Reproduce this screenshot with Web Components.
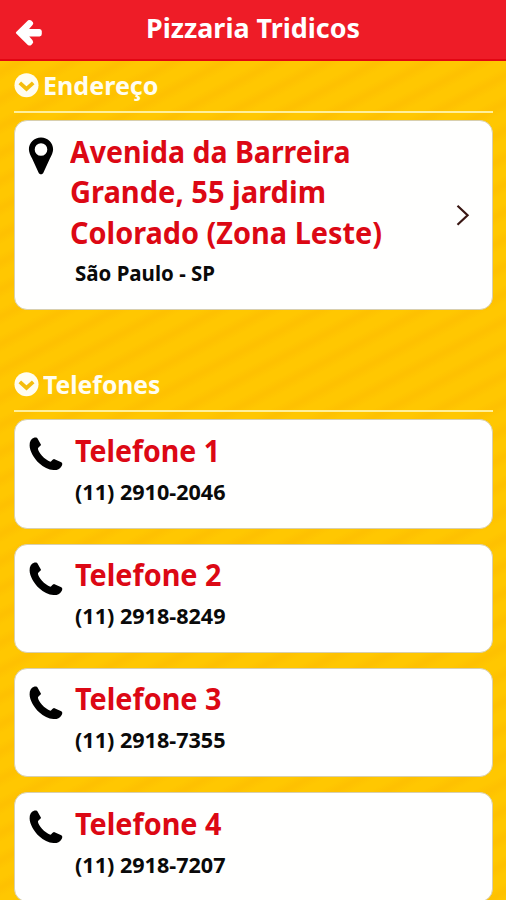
<!DOCTYPE html>
<html lang="pt-BR">
<head>
<meta charset="utf-8">
<title>Pizzaria Tridicos</title>
<style>
html,body{margin:0;height:900px;overflow:hidden}
body{font-family:"Noto Sans","Open Sans",sans-serif;font-weight:700}
</style>
</head>
<body>
<pizza-app></pizza-app>
<script>
// One line of text, condensed or widened to the advance width given in "w".
class FitLine extends HTMLElement{
  connectedCallback(){
    if(this.shadowRoot)return;
    const r=this.attachShadow({mode:'open'});
    r.innerHTML=`<style>:host{display:block;white-space:nowrap}span{display:inline-block;transform-origin:0 50%;vertical-align:top}</style><span><slot></slot></span>`;
    const s=r.querySelector('span');
    const w=parseFloat(this.getAttribute('w'));
    const n=s.getBoundingClientRect().width;
    if(w&&n){s.style.transform=`scaleX(${w/n})`;this.style.width=w+'px';}
  }
}
customElements.define('fit-line',FitLine);

class AppHeader extends HTMLElement{
  constructor(){
    super();
    this.attachShadow({mode:'open'}).innerHTML=`<style>
:host{display:grid;grid-template-columns:146px 1fr;box-sizing:border-box;height:61px;flex:none;background:#ee1c27;border-bottom:2px solid #e20612;color:#fff;font-size:27.5px;line-height:36px}
svg{margin:17px 0 0 14px}
.t{padding-top:10px}
</style>
<svg width="30" height="32" viewBox="14 17 30 32" fill="#fff" stroke="#fff" stroke-width="2" stroke-linejoin="round"><path d="M16.900 32.700 28.600 21.200Q29.800 20.500 31 21.600L32 22.600Q32.600 23.500 31.800 24.400L27 29.900H39.500Q40.800 30 40.800 31.200V34Q40.800 35.400 39.500 35.500H27L31.800 41Q32.600 42 31.800 42.900L30.800 44Q29.700 45 28.500 44.200Z"/></svg>
<div class="t"><slot></slot></div>`;
  }
}
customElements.define('app-header',AppHeader);

class SectionTitle extends HTMLElement{
  constructor(){
    super();
    this.attachShadow({mode:'open'}).innerHTML=`<style>
:host{display:flex;flex:none;box-sizing:border-box;height:52px;border-bottom:2px solid #fff09a;color:#fffdf0;font-size:25px;line-height:36px;padding-top:6.2px}
svg{margin:6px 4px 0 -.5px;flex:none}
</style>
<svg width="25" height="25" viewBox="0 0 25 25"><circle cx="12.5" cy="12.2" r="12" fill="#fffdf0"/><path d="M5.800 9.800 12.500 16 19.200 9.800" fill="none" stroke="#f5bd0c" stroke-width="3.8"/></svg>
<slot></slot>`;
  }
}
customElements.define('section-title',SectionTitle);

const ICONS={
  pin:`<svg width="26" height="38" viewBox="0 0 26 38"><path fill-rule="evenodd" d="M13 .4C6.200.4.900 5.700.900 12.300c0 3.200 1.600 6.200 3.200 9.300L10.400 35.200C11.400 38 14.600 38 15.600 35.200L21.900 21.600C23.500 18.500 25.100 15.500 25.100 12.300 25.100 5.700 19.800.4 13 .4ZM13 6.200a6.300 6.300 0 1 1 0 12.600 6.300 6.300 0 0 1 0-12.600Z"/></svg>`,
  phone:`<svg width="34" height="34" viewBox="0 0 34 34"><path d="M5 .8C6.800.3 8.200.8 8.800 2L12 7.700C12 8.700 9.800 9.800 8.900 11.200 9 15.400 15.600 22.600 21.400 24.700 22.600 24.400 23.600 22 25 22L32.300 25.200C33.600 25.900 33.500 27.500 32.700 28.900 30.700 32.100 28.200 33.300 24.500 33.100 19.500 32.900 14.500 30.300 10.200 26.300 5 21.700.7 14 .6 8.500.5 4.500 2 1.800 5 .8Z"/></svg>`
};

class InfoCard extends HTMLElement{
  constructor(){super();this.attachShadow({mode:'open'});}
  connectedCallback(){
    const icon=this.getAttribute('icon');
    this.shadowRoot.innerHTML=`<style>
:host{display:grid;grid-template-columns:60px 1fr auto;flex:none;box-sizing:border-box;height:109.6px;background:#fffffe;border:1px solid #d8cfae;border-radius:13px}
:host([icon=pin]){height:190px;grid-template-columns:55px 1fr auto}
.i svg{display:block;margin:17px 0 0 13.500px}
:host([icon=pin]) .i svg{margin:16.500px 0 0 13px}
.c{padding-top:10.600px}
:host([icon=pin]) .c{padding-top:11.200px}
.h{color:#dc0814;font-size:30px;line-height:40.350px}
.s{color:#0a0a0a;font-size:21px;line-height:30px;margin-top:5.700px}
:host([icon=pin]) .s{padding-left:5px;margin-top:5px}
.a{align-self:center;margin-right:21px}
.a svg{display:block;margin-top:1px}
</style>
<div class="i">${ICONS[icon]}</div>
<div class="c"><div class="h"><slot name="title"></slot></div><div class="s"><slot name="text"></slot></div></div>
<div class="a">${this.hasAttribute('link')?'<svg width="16" height="22" viewBox="0 0 16 22" fill="none" stroke="#3a1713" stroke-width="2.200"><path d="M2.500 1.700 12.600 11.200 2.500 20.700"/></svg>':''}</div>`;
  }
}
customElements.define('info-card',InfoCard);

class PizzaApp extends HTMLElement{
  constructor(){
    super();
    const tel=[['Telefone 1','(11) 2910-2046',145],['Telefone 2','(11) 2918-8249',146.5],['Telefone 3','(11) 2918-7355',146.5],['Telefone 4','(11) 2918-7207',146.5]];
    this.attachShadow({mode:'open'}).innerHTML=`<style>
:host{display:flex;flex-direction:column;height:900px;overflow:hidden;background:repeating-linear-gradient(152deg,#ffc701 0,#ffc701 8px,#fec101 15px,#fec101 17px,#ffc701 24px)}
main{display:flex;flex-direction:column;padding:0 13px 0 14px}
.list{display:flex;flex-direction:column;gap:14.700px;padding-top:7.300px}
.first{padding:6.800px 0 50.200px}
</style>
<app-header><fit-line w="214">Pizzaria Tridicos</fit-line></app-header>
<main>
<section-title><fit-line w="115.500">Endereço</fit-line></section-title>
<div class="list first"><info-card icon="pin" link>
<fit-line slot="title" w="280.500">Avenida da Barreira</fit-line><fit-line slot="title" w="256">Grande, 55 jardim</fit-line><fit-line slot="title" w="312">Colorado (Zona Leste)</fit-line>
<fit-line slot="text" w="140">São Paulo - SP</fit-line></info-card></div>
<section-title><fit-line w="117.500">Telefones</fit-line></section-title>
<div class="list">${tel.map(t=>`<info-card icon="phone"><fit-line slot="title" w="${t[2]}">${t[0]}</fit-line><fit-line slot="text" w="150.500">${t[1]}</fit-line></info-card>`).join('')}</div>
</main>`;
  }
}
customElements.define('pizza-app',PizzaApp);
</script>
</body>
</html>
